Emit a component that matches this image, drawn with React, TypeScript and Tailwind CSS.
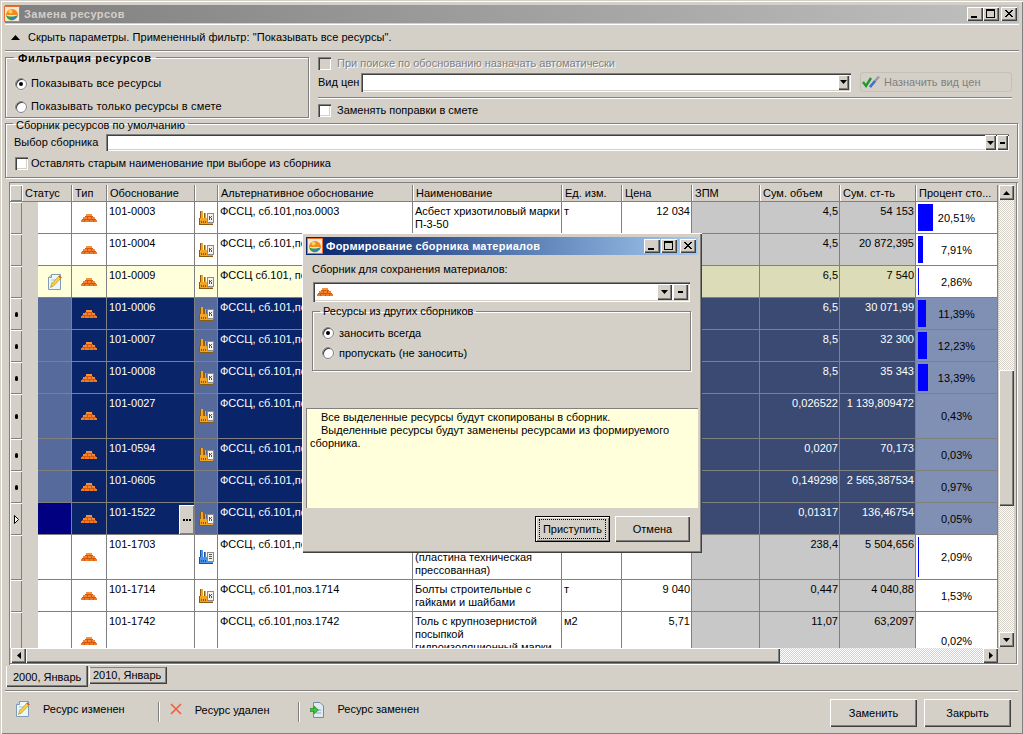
import React from "react";

const RAISED = "bg-[#d4d0c8] shadow-[inset_1px_1px_0_#ffffff,inset_-1px_-1px_0_#404040,inset_-2px_-2px_0_#808080]";
const SOFT = "bg-[#d4d0c8] shadow-[inset_1px_1px_0_#ffffff,inset_-1px_-1px_0_#808080]";
const SUNKEN = "bg-white shadow-[inset_1px_1px_0_#808080,inset_2px_2px_0_#404040,inset_-1px_-1px_0_#ffffff,inset_-2px_-2px_0_#d4d0c8]";
const DITHER = "bg-[#e8e6e2] bg-[image:repeating-conic-gradient(#d4d0c8_0_25%,#ffffff_0_50%)] bg-size-[2px_2px]";
const ETCHED = "border border-[#808080] shadow-[1px_1px_0_#ffffff,inset_1px_1px_0_#ffffff]";

function Bricks() {
  return (
    <svg width="16" height="8" viewBox="0 0 16 8" shapeRendering="crispEdges">
      <rect x="5" y="0" width="6" height="2" fill="#f5923c" />
      <rect x="4" y="2" width="8" height="1" fill="#d2590f" />
      <rect x="2" y="3" width="12" height="2" fill="#f28433" />
      <rect x="6" y="3" width="1" height="2" fill="#d2590f" />
      <rect x="10" y="3" width="1" height="2" fill="#d2590f" />
      <rect x="1" y="5" width="14" height="1" fill="#d2590f" />
      <rect x="0" y="6" width="16" height="2" fill="#ef7a22" />
      <rect x="3" y="6" width="1" height="2" fill="#d2590f" />
      <rect x="8" y="6" width="1" height="2" fill="#d2590f" />
      <rect x="12" y="6" width="1" height="2" fill="#d2590f" />
    </svg>
  );
}

function Factory({ blue }: { blue?: boolean }) {
  const fill = blue ? "#4b93e6" : "#f2a423";
  const dark = blue ? "#1c4f9c" : "#8a5a12";
  return (
    <svg width="15" height="15" viewBox="0 0 15 15" shapeRendering="crispEdges">
      <rect x="2" y="0" width="2" height="8" fill={fill} />
      <rect x="1" y="0" width="1" height="8" fill={dark} />
      <rect x="5" y="2" width="1" height="6" fill={dark} />
      <rect x="6" y="2" width="1" height="6" fill={fill} />
      <rect x="0" y="7" width="14" height="6" fill={fill} />
      <rect x="0" y="13" width="14" height="1" fill={dark} />
      <rect x="0" y="7" width="1" height="6" fill={dark} />
      <rect x="2" y="10" width="1" height="2" fill={dark} />
      <rect x="4" y="10" width="1" height="2" fill={dark} />
      <rect x="6" y="10" width="1" height="2" fill={dark} />
      <rect x="8" y="2" width="7" height="10" fill="#8c8c84" />
      <rect x="9" y="3" width="5" height="8" fill="#f4f2ea" />
      {blue ? (
        <>
          <rect x="10" y="4" width="3" height="1" fill="#555555" />
          <rect x="10" y="6" width="3" height="1" fill="#555555" />
          <rect x="10" y="8" width="3" height="1" fill="#555555" />
        </>
      ) : (
        <>
          <rect x="10" y="5" width="1" height="4" fill="#555555" />
          <rect x="11" y="6" width="1" height="1" fill="#555555" />
          <rect x="12" y="5" width="1" height="1" fill="#555555" />
          <rect x="12" y="7" width="1" height="2" fill="#555555" />
        </>
      )}
    </svg>
  );
}

function Note() {
  return (
    <svg width="14" height="16" viewBox="0 0 14 16">
      <path d="M3.500 .5H12.500V15.500H.5V3.500Z" fill="#eef6fb" stroke="#7f9cb0" />
      <path d="M3.500 .5V3.500H.5" fill="#cfe0ea" stroke="#7f9cb0" />
      <path d="M3 6H9M3 9H7M3 12H5" stroke="#a8c0d0" />
      <path d="M11.500 1.500L13.500 3.500L5.500 12L2.500 13.500L3.500 10Z" fill="#f7d23c" stroke="#a88a20" strokeWidth=".6" />
      <path d="M11.500 1.500L13.500 3.500L12.500 4.600L10.400 2.600Z" fill="#e0503c" />
    </svg>
  );
}

function AppIcon() {
  return (
    <svg width="16" height="16" viewBox="0 0 16 16" className="shrink-0">
      <rect x=".5" y=".5" width="15" height="15" fill="#f7e6d0" stroke="#e8702a" />
      <path d="M2 9a6 6 0 0 1 12 0Z" fill="#f28a1e" />
      <circle cx="6.500" cy="5.500" r="2" fill="#fbd060" />
      <path d="M2 9C5 11 9 11 14 9C13 13 9 15 6 14C4 13.500 2.500 11.500 2 9Z" fill="#2f9e44" />
      <path d="M7 11C9 11 11 11 13 10C12 12.500 10 14 7.500 14Z" fill="#3b78d8" />
    </svg>
  );
}

function RedX() {
  return (
    <svg width="12" height="12" viewBox="0 0 12 12">
      <path d="M1 1L11 11M11 1L1 11" stroke="#f0603f" strokeWidth="1.7" />
    </svg>
  );
}

function ReplaceIcon() {
  return (
    <svg width="14" height="16" viewBox="0 0 14 16">
      <path d="M3.500 .5H10L13.500 4V15.500H3.500Z" fill="#dfeaf4" stroke="#6f8ca6" />
      <path d="M6 8H11M6 11H11" stroke="#8fa8bc" />
      <path d="M0 6.500H4V4L8.500 8L4 12V9.500H0Z" fill="#3cc23c" stroke="#1f7d1f" strokeWidth=".6" />
    </svg>
  );
}

function CheckPen() {
  return (
    <svg width="20" height="14" viewBox="0 0 20 14" className="shrink-0">
      <path d="M1 7L4 11L9 3" fill="none" stroke="#1d9a2c" strokeWidth="2.400" />
      <path d="M8 12L17 1.500" stroke="#9a9a9a" strokeWidth="2.400" />
      <path d="M8 12L13 6" stroke="#3f6fd0" strokeWidth="2.400" />
    </svg>
  );
}

function Radio({ on }: { on?: boolean }) {
  return (
    <div className="relative size-3 shrink-0 rounded-full bg-white border border-[#808080] shadow-[inset_1px_1px_0_#404040,0_0_0_0.5px_#e8e6e0]">
      {on && <div className="absolute left-[3px] top-[3px] size-1 rounded-full bg-black" />}
    </div>
  );
}

function Check({ disabled }: { disabled?: boolean }) {
  return <div className={"size-[13px] shrink-0 " + (disabled ? "bg-[#d4d0c8] shadow-[inset_1px_1px_0_#808080,inset_2px_2px_0_#404040,inset_-1px_-1px_0_#ffffff]" : SUNKEN)} />;
}

function WinBtn({ kind }: { kind: "min" | "max" | "close" }) {
  return (
    <div className={"relative h-[14px] w-4 shrink-0 " + RAISED}>
      {kind === "min" && <div className="absolute left-[4px] top-[9px] h-[2px] w-[6px] bg-black" />}
      {kind === "max" && <div className="absolute left-[3px] top-[2px] h-[9px] w-[9px] border border-black border-t-2" />}
      {kind === "close" && (
        <svg width="16" height="14" viewBox="0 0 16 14" className="absolute left-0 top-0">
          <path d="M4 3L11 10M5 3L12 10M11 3L4 10M12 3L5 10" stroke="#000000" strokeWidth="1" />
        </svg>
      )}
    </div>
  );
}

function Arrow({ dir }: { dir: "up" | "down" | "left" | "right" }) {
  const d = { up: "M0 4L3.500 0L7 4Z", down: "M0 0L7 0L3.500 4Z", left: "M4 0V7L0 3.500Z", right: "M0 0V7L4 3.500Z" }[dir];
  const horizontal = dir === "left" || dir === "right";
  return (
    <svg width={horizontal ? 4 : 7} height={horizontal ? 7 : 4} viewBox={horizontal ? "0 0 4 7" : "0 0 7 4"}>
      <path d={d} fill="#000000" />
    </svg>
  );
}

function ScrollBtn({ dir, cls }: { dir: "up" | "down" | "left" | "right"; cls: string }) {
  return (
    <div className={"flex shrink-0 items-center justify-center " + cls + " " + RAISED}>
      <Arrow dir={dir} />
    </div>
  );
}

type Kind = "n" | "y" | "s" | "c";
type Row = {
  code: string;
  alt: string;
  name?: string;
  unit?: string;
  price?: string;
  vol: string;
  sum: string;
  pct: string;
  bar: number;
  h: string;
  kind: Kind;
  icon?: "k" | "b";
};

const rows: Row[] = [
  { code: "101-0003", alt: "ФССЦ, сб.101,поз.0003", name: "Асбест хризотиловый марки П-3-50", unit: "т", price: "12 034", vol: "4,5", sum: "54 153", pct: "20,51%", bar: 15, h: "h-8", kind: "n", icon: "k" },
  { code: "101-0004", alt: "ФССЦ, сб.101,поз.0004", vol: "4,5", sum: "20 872,395", pct: "7,91%", bar: 5, h: "h-8", kind: "n", icon: "k" },
  { code: "101-0009", alt: "ФССЦ сб.101, поз.0009", vol: "6,5", sum: "7 540", pct: "2,86%", bar: 1, h: "h-8", kind: "y", icon: "k" },
  { code: "101-0006", alt: "ФССЦ, сб.101,поз.0006", vol: "6,5", sum: "30 071,99", pct: "11,39%", bar: 8, h: "h-8", kind: "s", icon: "k" },
  { code: "101-0007", alt: "ФССЦ, сб.101,поз.0007", vol: "8,5", sum: "32 300", pct: "12,23%", bar: 9, h: "h-8", kind: "s", icon: "k" },
  { code: "101-0008", alt: "ФССЦ, сб.101,поз.0008", vol: "8,5", sum: "35 343", pct: "13,39%", bar: 10, h: "h-8", kind: "s", icon: "k" },
  { code: "101-0027", alt: "ФССЦ, сб.101,поз.0027", vol: "0,026522", sum: "1 139,809472", pct: "0,43%", bar: 0, h: "h-[45px]", kind: "s", icon: "k" },
  { code: "101-0594", alt: "ФССЦ, сб.101,поз.0594", vol: "0,0207", sum: "70,173", pct: "0,03%", bar: 0, h: "h-8", kind: "s", icon: "k" },
  { code: "101-0605", alt: "ФССЦ, сб.101,поз.0605", vol: "0,149298", sum: "2 565,387534", pct: "0,97%", bar: 0, h: "h-8", kind: "s" },
  { code: "101-1522", alt: "ФССЦ, сб.101,поз.1522", vol: "0,01317", sum: "136,46754", pct: "0,05%", bar: 0, h: "h-8", kind: "c", icon: "k" },
  { code: "101-1703", alt: "ФССЦ, сб.101,поз.1703", name: "\u00a0\n(пластина техническая\nпрессованная)", vol: "238,4", sum: "5 504,656", pct: "2,09%", bar: 1, h: "h-[45px]", kind: "n", icon: "b" },
  { code: "101-1714", alt: "ФССЦ, сб.101,поз.1714", name: "Болты строительные с гайками и шайбами", unit: "т", price: "9 040", vol: "0,447", sum: "4 040,88", pct: "1,53%", bar: 0, h: "h-8", kind: "n", icon: "k" },
  { code: "101-1742", alt: "ФССЦ, сб.101,поз.1742", name: "Толь с крупнозернистой посыпкой гидроизоляционный марки", unit: "м2", price: "5,71", vol: "11,07", sum: "63,2097", pct: "0,02%", bar: 0, h: "h-[58px]", kind: "n" },
];

const tone: Record<Kind, { base: string; tinted: string; ro: string; pct: string; status: string }> = {
  n: { base: "bg-white text-black", tinted: "bg-white text-black", ro: "bg-[#c8c8c8] text-black", pct: "bg-white text-black", status: "bg-white" },
  y: { base: "bg-[#ffffdc] text-black", tinted: "bg-[#ffffdc] text-black", ro: "bg-[#dcdcb8] text-black", pct: "bg-white text-black", status: "bg-[#ffffdc]" },
  s: { base: "bg-[#0a246a] text-white", tinted: "bg-[#566a9b] text-white", ro: "bg-[#3a4a72] text-white", pct: "bg-[#8090b5] text-black", status: "bg-[#566a9b]" },
  c: { base: "bg-[#0a246a] text-white", tinted: "bg-[#566a9b] text-white", ro: "bg-[#3a4a72] text-white", pct: "bg-[#8090b5] text-black", status: "bg-[#000080]" },
};

const CELL = "shrink-0 overflow-hidden border-r border-b border-[#808080] pl-[2px] pr-[1px] pt-[3px] leading-[13px]";

const headers: [string, string][] = [
  ["Статус", "w-[50px]"],
  ["Тип", "w-[35px]"],
  ["Обоснование", "w-[88px]"],
  ["", "w-[23px]"],
  ["Альтернативное обоснование", "w-[195px]"],
  ["Наименование", "w-[149px]"],
  ["Ед. изм.", "w-[60px]"],
  ["Цена", "w-[70px]"],
  ["ЗПМ", "w-[68px]"],
  ["Сум. объем", "w-[80px]"],
  ["Сум. ст-ть", "w-[76px]"],
  ["Процент сто...", "w-[82px]"],
];

function GridRow({ r }: { r: Row }) {
  const t = tone[r.kind];
  return (
    <div className={"flex shrink-0 " + r.h}>
      <div className={"flex w-3 shrink-0 items-center justify-center " + SOFT}>
        {r.kind === "s" && <div className="h-[5px] w-[3px] rounded-full bg-black" />}
        {r.kind === "c" && (
          <svg width="5" height="9" viewBox="0 0 5 9">
            <path d="M.5 .5L4.500 4.500L.5 8.500Z" fill="#ffffff" stroke="#000000" />
          </svg>
        )}
      </div>
      <div className="w-4 shrink-0 bg-[#d4d0c8]" />
      <div className={"flex w-[34px] shrink-0 items-center justify-center border-r border-b border-[#808080] " + t.status}>
        {r.kind === "y" && <Note />}
      </div>
      <div className={"flex w-[35px] shrink-0 items-center justify-center border-r border-b border-[#808080] " + t.base}>
        <Bricks />
      </div>
      <div className={"relative w-[88px] " + CELL + " " + t.base}>
        {r.code}
        {r.kind === "c" && (
          <div className={"absolute right-0 top-[2px] flex h-[29px] w-[15px] items-center justify-center gap-px " + SOFT}>
            <div className="size-[2px] bg-black" />
            <div className="size-[2px] bg-black" />
            <div className="size-[2px] bg-black" />
          </div>
        )}
      </div>
      <div className={"flex w-[23px] shrink-0 items-center justify-center border-r border-b border-[#808080] pt-px " + t.tinted}>
        {r.icon && <Factory blue={r.icon === "b"} />}
      </div>
      <div className={"w-[195px] whitespace-nowrap " + CELL + " " + t.base}>{r.alt}</div>
      <div className={"w-[149px] whitespace-pre-line " + CELL + " " + t.base}>{r.name}</div>
      <div className={"w-[60px] " + CELL + " " + t.base}>{r.unit}</div>
      <div className={"w-[70px] text-right " + CELL + " " + t.base}>{r.price}</div>
      <div className={"w-[68px] " + CELL + " " + t.ro} />
      <div className={"w-[80px] text-right " + CELL + " " + t.ro}>{r.vol}</div>
      <div className={"w-[76px] whitespace-nowrap text-right " + CELL + " " + t.ro}>{r.sum}</div>
      <div className={"relative flex w-[82px] shrink-0 items-center justify-center border-r border-b border-[#808080] " + t.pct}>
        {r.bar > 0 && (
          <div className="absolute bottom-[2px] left-[2px] top-[2px] bg-[#0000ff]" style={{ width: r.bar }} />
        )}
        <span className="pt-px">{r.pct}</span>
      </div>
    </div>
  );
}

function Grid() {
  return (
    <div className="ml-1 mt-1 flex h-[483px] w-[1009px] shrink-0 pl-px pt-[3px] shadow-[inset_1px_1px_0_#808080,inset_-1px_-1px_0_#ffffff,inset_-2px_-2px_0_#808080]">
      <div className="flex w-[988px] shrink-0 flex-col">
        <div className="flex h-[17px] shrink-0 border-b border-[#808080]">
          <div className={"w-3 shrink-0 " + SOFT} />
          {headers.map(([label, w], i) => (
            <div key={i} className={"shrink-0 overflow-hidden whitespace-nowrap border-r border-[#808080] pl-[3px] leading-[16px] shadow-[inset_1px_0_0_#ffffff] " + w}>
              {label}
            </div>
          ))}
        </div>
        <div className="h-[446px] shrink-0 overflow-hidden">
          {rows.map((r) => (
            <GridRow key={r.code} r={r} />
          ))}
        </div>
        <div className="flex h-[15px] shrink-0 pl-px">
          <ScrollBtn dir="left" cls="w-[15px]" />
          <div className={"w-[754px] shrink-0 " + RAISED} />
          <div className={"flex-1 " + DITHER} />
          <ScrollBtn dir="right" cls="w-[15px]" />
        </div>
      </div>
      <div className="flex h-[478px] w-[16px] shrink-0 flex-col pl-px">
        <ScrollBtn dir="up" cls="h-[15px]" />
        <div className={"h-[170px] shrink-0 " + DITHER} />
        <div className={"h-[136px] shrink-0 " + RAISED} />
        <div className={"h-[126px] shrink-0 " + DITHER} />
        <ScrollBtn dir="down" cls="h-[15px]" />
      </div>
    </div>
  );
}

function Dialog() {
  return (
    <div className={"absolute left-[302px] top-[233px] flex h-[320px] w-[400px] flex-col px-1 pt-1 " + RAISED}>
      <div className="flex h-[18px] shrink-0 items-center bg-linear-to-r from-[#0a246a] to-[#a6caf0] pl-px pr-[2px]">
        <AppIcon />
        <span className="ml-[3px] font-bold leading-[18px] tracking-[0.25px] text-white">Формирование сборника материалов</span>
        <div className="ml-auto flex items-center gap-px">
          <WinBtn kind="min" />
          <WinBtn kind="max" />
          <div className="w-px" />
          <WinBtn kind="close" />
        </div>
      </div>
      <div className="ml-[6px] mt-2 leading-[13px]">Сборник для сохранения материалов:</div>
      <div className={"ml-[7px] mt-[6px] flex h-[20px] w-[377px] shrink-0 items-center pl-1 pr-[2px] " + SUNKEN}>
        <Bricks />
        <div className={"ml-auto flex h-4 w-[15px] items-center justify-center " + RAISED}><Arrow dir="down" /></div>
        <div className={"ml-px flex h-4 w-[15px] items-center justify-center " + RAISED}><div className="h-[2px] w-[5px] bg-black" /></div>
      </div>
      <fieldset className={"ml-[6px] mt-[3px] h-[66px] w-[379px] shrink-0 " + ETCHED}>
        <legend className="ml-[7px] h-[13px] px-[3px] leading-[13px]">Ресурсы из других сборников</legend>
        <div className="ml-[9px] mt-[5px] flex h-5 items-center gap-[5px]"><Radio on />заносить всегда</div>
        <div className="ml-[9px] flex h-5 items-center gap-[5px]"><Radio />пропускать (не заносить)</div>
      </fieldset>
      <div className="mt-[37px] h-[100px] w-[392px] shrink-0 bg-[#ffffdc] pl-[4px] pt-[3px] leading-[13px] shadow-[inset_1px_1px_0_#808080]">
        <p className="indent-[11px]">Все выделенные ресурсы будут скопированы в сборник.</p>
        <p className="indent-[11px]">Выделенные ресурсы будут заменены ресурсами из формируемого сборника.</p>
      </div>
      <div className="mt-2 flex justify-end gap-[5px] pr-2">
        <div className="flex h-[26px] w-[75px] items-center justify-center border border-black bg-[#d4d0c8] shadow-[inset_1px_1px_0_#ffffff,inset_-1px_-1px_0_#808080]">
          <span className="flex h-[20px] w-[67px] items-center justify-center border border-dotted border-black">Приступить</span>
        </div>
        <div className={"flex h-[26px] w-[75px] items-center justify-center " + RAISED}>Отмена</div>
      </div>
    </div>
  );
}

export default function App() {
  return (
    <div className="relative flex h-[734px] w-[1023px] flex-col overflow-hidden bg-[#d4d0c8] pl-[5px] pr-[4px] pt-[5px] font-['Liberation_Sans',sans-serif] text-[11px] leading-[13px] text-black shadow-[inset_1px_1px_0_#d4d0c8,inset_2px_2px_0_#ffffff,inset_-1px_-1px_0_#808080]">
      <div className="flex h-[18px] shrink-0 items-center bg-linear-to-r from-[#808080] to-[#c0c0c0] pr-[2px]">
        <div className="-ml-px"><AppIcon /></div>
        <span className="ml-[4px] text-[11px] font-bold tracking-[0.45px] text-[#d4d0c8]">Замена ресурсов</span>
        <div className="ml-auto flex items-center">
          <WinBtn kind="min" />
          <WinBtn kind="max" />
          <div className="w-[2px]" />
          <WinBtn kind="close" />
        </div>
      </div>

      <div className="mt-px flex h-[27px] shrink-0 items-center border-b border-[#808080] pl-[6px] shadow-[inset_0_1px_0_#ffffff,0_1px_0_#ffffff]">
        <svg width="9" height="5" viewBox="0 0 9 5" className="shrink-0">
          <path d="M0 5L4.500 0L9 5Z" fill="#000000" />
        </svg>
        <span className="ml-[8px] tracking-[0.06px]">Скрыть параметры. Примененный фильтр: "Показывать все ресурсы".</span>
      </div>

      <div className="flex h-[67px] shrink-0">
        <fieldset className={"h-[67px] w-[304px] shrink-0 " + ETCHED}>
          <legend className="ml-[8px] h-[13px] px-[4px] pt-px font-bold leading-[13px] tracking-[0.65px]">Фильтрация ресурсов</legend>
          <div className="ml-[9px] mt-[8px] flex h-[23px] items-center gap-[4px] tracking-[0.18px]"><Radio on />Показывать все ресурсы</div>
          <div className="ml-[9px] flex h-[23px] items-center gap-[4px] tracking-[0.18px]"><Radio />Показывать только ресурсы в смете</div>
        </fieldset>
        <div className="ml-[9px] flex w-[694px] shrink-0 flex-col pt-[6px]">
          <div className="flex h-[13px] items-center gap-[6px] text-[#808080] [text-shadow:1px_1px_0_#ffffff]">
            <Check disabled />
            При поиске по обоснованию назначать автоматически
          </div>
          <div className="mt-[2px] flex h-5 items-center">
            <span className="w-[43px] shrink-0">Вид цен</span>
            <div className={"flex h-[19px] w-[490px] shrink-0 items-center justify-end pr-[2px] " + SUNKEN}>
              <div className={"flex h-[15px] w-[11px] items-center justify-center " + RAISED}><Arrow dir="down" /></div>
            </div>
            <div className="ml-[9px] flex h-5 w-[152px] shrink-0 items-center gap-[2px] rounded-[3px] border border-[#c4c0b8] pl-px text-[#808080]">
              <CheckPen />
              Назначить вид цен
            </div>
          </div>
          <div className="mt-[5px] h-[2px] shrink-0 border-t border-[#808080] border-b-white border-b" />
          <div className="mt-[5px] flex h-[13px] items-center gap-[6px]">
            <Check />
            Заменять поправки в смете
          </div>
        </div>
      </div>

      <fieldset className={"mt-px h-[59px] w-[1013px] shrink-0 " + ETCHED}>
        <legend className="ml-[7px] h-[9px] px-[3px] leading-[13px]">Сборник ресурсов по умолчанию</legend>
        <div className="ml-2 mt-[6px] flex h-[17px] items-center">
          <span className="w-[92px] shrink-0">Выбор сборника</span>
          <div className={"flex h-[17px] w-[903px] shrink-0 items-center justify-end gap-px pr-[1px] " + SUNKEN}>
            <div className={"flex h-[15px] w-[11px] items-center justify-center " + RAISED}><Arrow dir="down" /></div>
            <div className={"flex h-[15px] w-[11px] items-center justify-center " + RAISED}><div className="h-[2px] w-[5px] bg-black" /></div>
          </div>
        </div>
        <div className="ml-[9px] mt-[6px] flex h-[13px] items-center gap-[3px]">
          <Check />
          Оставлять старым наименование при выборе из сборника
        </div>
      </fieldset>

      <Grid />

      <div className="ml-px mt-px flex h-[21px] shrink-0 items-start">
        <div className="flex h-[21px] w-[82px] shrink-0 items-center bg-[#d4d0c8] pl-[7px] pt-px shadow-[inset_1px_0_0_#ffffff,inset_-1px_-1px_0_#404040,inset_-2px_-2px_0_#808080]">2000, Январь</div>
        <div className="ml-px mt-px flex h-[17px] w-[78px] shrink-0 items-center pl-[4px] shadow-[inset_1px_0_0_#ffffff,inset_-1px_-1px_0_#404040,inset_-2px_-2px_0_#808080,inset_0_1px_0_#808080]">2010, Январь</div>
      </div>

      <div className="mt-[3px] flex h-[36px] w-[1013px] shrink-0 items-start border-t border-[#808080] shadow-[inset_0_1px_0_#ffffff]">
        <div className="ml-[11px] mt-[10px]"><Note /></div>
        <span className="ml-[13px] mt-[12px]">Ресурс изменен</span>
        <div className="ml-[33px] mt-[11px] h-5 w-[2px] shrink-0 border-l border-r border-l-[#808080] border-r-white" />
        <div className="ml-[10px] mt-[12px]"><RedX /></div>
        <span className="ml-[13px] mt-[13px]">Ресурс удален</span>
        <div className="ml-[29px] mt-[11px] h-5 w-[2px] shrink-0 border-l border-r border-l-[#808080] border-r-white" />
        <div className="ml-[10px] mt-[11px]"><ReplaceIcon /></div>
        <span className="ml-[13px] mt-[12px]">Ресурс заменен</span>
        <div className={"ml-auto mt-[8px] flex h-[28px] w-[87px] shrink-0 items-center justify-center " + RAISED}>Заменить</div>
        <div className={"ml-[7px] mr-[7px] mt-[8px] flex h-[28px] w-[87px] shrink-0 items-center justify-center " + RAISED}>Закрыть</div>
      </div>

      <Dialog />
    </div>
  );
}
